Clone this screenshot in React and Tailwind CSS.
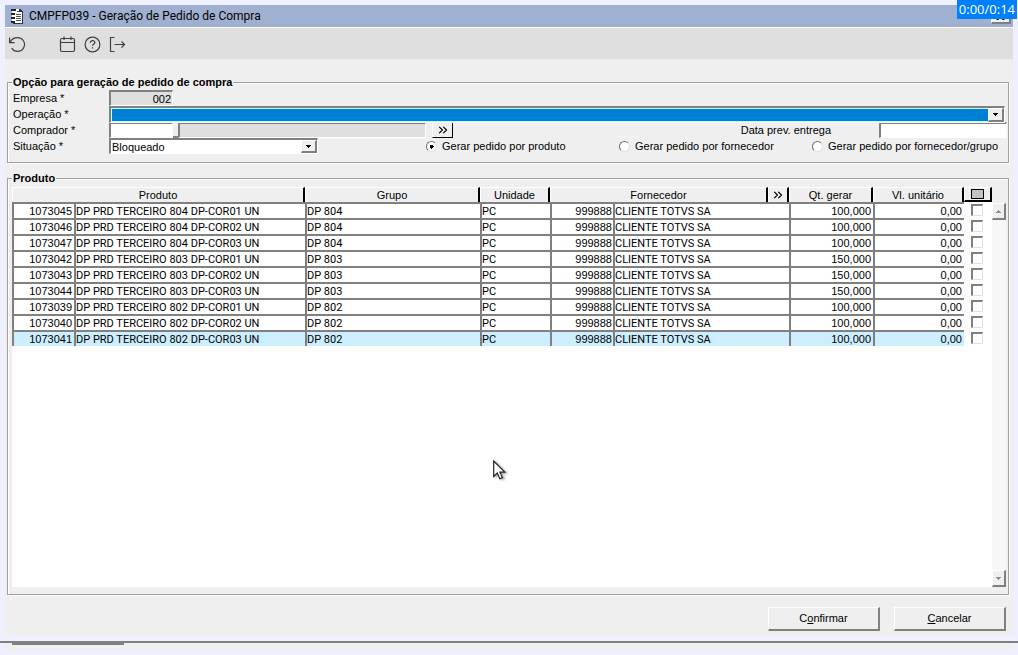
import { ChevronsRight } from 'lucide-react'

const rows = [
  { code: '1073045', name: 'DP PRD TERCEIRO 804 DP-COR01 UN', group: 'DP 804', qty: '100,000' },
  { code: '1073046', name: 'DP PRD TERCEIRO 804 DP-COR02 UN', group: 'DP 804', qty: '100,000' },
  { code: '1073047', name: 'DP PRD TERCEIRO 804 DP-COR03 UN', group: 'DP 804', qty: '100,000' },
  { code: '1073042', name: 'DP PRD TERCEIRO 803 DP-COR01 UN', group: 'DP 803', qty: '150,000' },
  { code: '1073043', name: 'DP PRD TERCEIRO 803 DP-COR02 UN', group: 'DP 803', qty: '150,000' },
  { code: '1073044', name: 'DP PRD TERCEIRO 803 DP-COR03 UN', group: 'DP 803', qty: '150,000' },
  { code: '1073039', name: 'DP PRD TERCEIRO 802 DP-COR01 UN', group: 'DP 802', qty: '100,000' },
  { code: '1073040', name: 'DP PRD TERCEIRO 802 DP-COR02 UN', group: 'DP 802', qty: '100,000' },
  { code: '1073041', name: 'DP PRD TERCEIRO 802 DP-COR03 UN', group: 'DP 802', qty: '100,000' },
]

const modes = ['Gerar pedido por produto', 'Gerar pedido por fornecedor', 'Gerar pedido por fornecedor/grupo']

const etched = 'min-w-0 border border-[#a0a0a0] shadow-[1px_1px_0_#fff,inset_1px_1px_0_#fff]'
const sunken = 'border border-l-2 border-t-2 border-t-[#808080] border-l-[#808080] border-r-white border-b-white'
const raised = 'bg-[#efefef] border-r-2 border-b-2 border-t border-l border-t-white border-l-white border-r-[#808080] border-b-[#808080]'
const th = 'h-[15px] p-0 font-normal text-center border-t border-l border-t-white border-l-white border-r-2 border-r-black bg-[#efefef]'
const cell = 'h-4 p-0 leading-[13px] overflow-hidden whitespace-nowrap border-t-2 border-l-2 border-[#808080]'
const textCell = `${cell} font-['Roboto','Liberation_Sans',sans-serif]`

function Arrow({ up, color = '#000' }) {
  return (
    <svg width="5" height="3" viewBox="0 0 5 3" shapeRendering="crispEdges">
      <path d={up ? 'M2 0h1v1h1v1h1v1H0V2h1V1h1z' : 'M0 0h5v1H4v1H3v1H2V2H1V1H0z'} fill={color} />
    </svg>
  )
}

function DropArrow() {
  return (
    <span className={`absolute right-0 top-0 bottom-0 w-4 flex items-center justify-center pointer-events-none ${raised}`}>
      <Arrow />
    </span>
  )
}

function Toolbar() {
  const btn = 'w-[25px] h-5 flex items-center justify-center'
  const svg = { width: 17, height: 17, viewBox: '0 0 17 17', fill: 'none', stroke: '#404040', strokeWidth: 1.2 }
  return (
    <div className="h-8 flex items-center pt-px border-t border-white bg-[#dfdfdf]">
      <button type="button" aria-label="Desfazer" className={btn}>
        <svg {...svg}><path d="M.6 1.500v5.100h5M1 6.600C2.200 3.800 5 1.600 8.600 1.600a6.900 6.900 0 1 1-5.900 10.500" /></svg>
      </button>
      <div className="w-[25px]" />
      <button type="button" aria-label="Calendário" className={btn}>
        <svg {...svg}><rect x="1.500" y="2.500" width="14" height="13" rx="1.500" /><path d="M1.500 6.500h14M5 .5v3.500M12 .5v3.500" /></svg>
      </button>
      <button type="button" aria-label="Ajuda" className={btn}>
        <svg {...svg}>
          <circle cx="8.500" cy="8.500" r="7.400" />
          <path d="M6.300 6.800c0-1.500 1-2.200 2.200-2.200s2.300.8 2.300 2c0 1.700-2.300 1.600-2.300 3.200M8.500 11.200v1.400" />
        </svg>
      </button>
      <button type="button" aria-label="Sair" className={btn}>
        <svg {...svg}><path d="M5.500 1.500h-4v14h4M5.500 8.500h10M12.500 5.500l3 3-3 3" /></svg>
      </button>
    </div>
  )
}

function Options() {
  const label = 'w-[97px] pl-px shrink-0'
  return (
    <fieldset className={`${etched} pl-1 pr-px pb-2 leading-4`}>
      <legend className="px-px h-4 leading-4 font-bold bg-[#efefef]">Opção para geração de pedido de compra</legend>
      <div className="flex h-4">
        <label htmlFor="empresa" className={label}>Empresa *</label>
        <input id="empresa" readOnly defaultValue="002" className={`w-16 h-4 px-px text-right bg-[#dfdfdf] ${sunken}`} />
      </div>
      <div className="flex h-4">
        <label htmlFor="operacao" className={label}>Operação *</label>
        <div className={`relative flex-1 h-[17px] mr-[2px] ${sunken}`}>
          <select id="operacao" className="block w-full h-full appearance-none bg-[#0080d4] border border-[#b8ffff] outline-none">
            <option></option>
          </select>
          <DropArrow />
        </div>
      </div>
      <div className="flex h-4">
        <label htmlFor="comprador" className={label}>Comprador *</label>
        <input id="comprador" className={`w-16 h-4 px-px bg-white outline-none ${sunken}`} />
        <div className="w-[5px] h-4 bg-[#efefef] border-b-2 border-b-[#808080]" />
        <input aria-label="Nome do comprador" readOnly className={`w-[248px] h-4 bg-[#dfdfdf] ${sunken}`} />
        <button type="button" aria-label="Buscar comprador" className="ml-[6px] w-[21px] h-4 flex items-center justify-center bg-[#efefef] border-r border-b border-black border-l border-l-white">
          <ChevronsRight size={14} strokeWidth={2} />
        </button>
        <label htmlFor="entrega" className="ml-auto mr-12">Data prev. entrega</label>
        <input id="entrega" className={`w-32 h-4 px-px bg-white outline-none ${sunken}`} />
      </div>
      <div className="flex h-4">
        <label htmlFor="situacao" className={label}>Situação *</label>
        <div className={`relative w-[209px] h-4 bg-white ${sunken}`}>
          <select id="situacao" className="block w-full h-full px-px appearance-none leading-3 outline-none">
            <option>Bloqueado</option>
          </select>
          <DropArrow />
        </div>
        <div className="ml-auto grid grid-cols-[193px_193px_195px]">
          {modes.map((m, i) => (
            <label key={m} className="flex items-center gap-[5px] whitespace-nowrap">
              <input
                type="radio"
                name="modo"
                defaultChecked={i === 0}
                className="appearance-none w-[11px] h-[11px] shrink-0 rounded-full bg-white border border-t-[#707070] border-l-[#707070] border-r-[#e0e0e0] border-b-[#e0e0e0] checked:bg-[radial-gradient(#000_2px,#fff_2px)]"
              />
              {m}
            </label>
          ))}
        </div>
      </div>
    </fieldset>
  )
}

function ScrollBar() {
  const btn = `h-[17px] w-[14px] flex items-center justify-center ${raised}`
  return (
    <div className="w-[14px] mt-4 flex flex-col justify-between bg-[#f7f7f7]">
      <button type="button" aria-label="Rolar para cima" className={btn}><Arrow up color="#909090" /></button>
      <button type="button" aria-label="Rolar para baixo" className={btn}><Arrow color="#909090" /></button>
    </div>
  )
}

function Products() {
  return (
    <section className={`${etched} mt-[15px] flex-1 flex flex-col pl-1 pr-[2px] pb-[7px]`}>
      <h2 className="self-start -mt-[9px] px-px h-[17px] leading-4 font-bold bg-[#efefef]">Produto</h2>
      <div className="flex-1 flex">
        <div className="flex-1 flex flex-col">
          <table className="w-full table-fixed border-separate border-spacing-0 leading-[14px]">
            <colgroup>
              <col className="w-[62px]" />
              <col />
              <col className="w-[175px]" />
              <col className="w-[70px]" />
              <col className="w-[63px]" />
              <col className="w-[155px]" />
              <col className="w-[21px]" />
              <col className="w-[84px]" />
              <col className="w-[91px]" />
              <col className="w-[28px]" />
            </colgroup>
            <thead>
              <tr>
                <th colSpan={2} className={th}>Produto</th>
                <th className={th}>Grupo</th>
                <th className={th}>Unidade</th>
                <th colSpan={2} className={th}>Fornecedor</th>
                <th className={th} aria-label="Buscar"><ChevronsRight size={14} strokeWidth={2} className="mx-auto" /></th>
                <th className={th}>Qt. gerar</th>
                <th className={th}>Vl. unitário</th>
                <th className={`${th} border-b-2 border-b-black`}>
                  <button type="button" aria-label="Marcar todos" className="block mx-auto w-[13px] h-[10px] border border-black bg-[#c0c4c8]" />
                </th>
              </tr>
            </thead>
            <tbody>
              {rows.map((r, i) => (
                <tr key={r.code} className={i === rows.length - 1 ? 'bg-[#cceeff]' : 'bg-white'}>
                  <td className={`${cell} text-right pr-[2px]`}>{r.code}</td>
                  <td className={textCell}>{r.name}</td>
                  <td className={textCell}>{r.group}</td>
                  <td className={textCell}>PC</td>
                  <td className={`${cell} text-right pr-px`}>999888</td>
                  <td colSpan={2} className={textCell}>CLIENTE TOTVS SA</td>
                  <td className={`${cell} text-right pr-[2px]`}>{r.qty}</td>
                  <td className={`${cell} text-right pr-[2px]`}>0,00</td>
                  <td className="h-4 p-0 bg-white">
                    <input
                      type="checkbox"
                      aria-label={`Selecionar ${r.code}`}
                      className="block ml-[7px] appearance-none w-3 h-3 bg-white border-t-2 border-l-2 border-r border-b border-t-[#808080] border-l-[#808080] border-r-[#dfdfdf] border-b-[#dfdfdf]"
                    />
                  </td>
                </tr>
              ))}
            </tbody>
          </table>
          <div className="flex-1 bg-white" />
        </div>
        <ScrollBar />
      </div>
    </section>
  )
}

export default function App() {
  const action = `w-28 h-6 text-center ${raised}`
  return (
    <div className="relative min-h-screen flex flex-col pt-[5px] bg-[#eeefff] text-[11px] text-black font-['Liberation_Sans',Arial,sans-serif]">
      <div className="flex-1 flex flex-col mx-[5px] bg-[#efefef]">
        <header className="h-[22px] flex items-center pl-[5px] pr-[2px] bg-[#a0b0d0]">
          <svg width="14" height="16" viewBox="0 0 14 16" shapeRendering="crispEdges">
            <path d="M3 1h7l3 3v12H3z" fill="#303438" />
            <path d="M2 1h7v3h3v11H2z" fill="#fff" />
            <path d="M1 1h5v2H1zM1 5h4v2H1zM1 9h4v2H1zM1 13h4v2H1z" fill="#202428" />
            <path d="M7 3h2v1H7zM6 6h5v1H6zM6 8h5v1H6zM6 10h5v1H6zM6 12h5v1H6z" fill="#505458" />
          </svg>
          <h1 className="ml-[5px] text-[12px] font-['Roboto','Liberation_Sans',sans-serif]">CMPFP039 - Geração de Pedido de Compra</h1>
          <button type="button" aria-label="Fechar" className={`ml-auto w-5 h-4 flex items-center justify-center ${raised}`}>
            <svg width="9" height="8" viewBox="0 0 9 8"><path d="M1 0l7 8M8 0L1 8" stroke="#000" strokeWidth="2" /></svg>
          </button>
        </header>
        <Toolbar />
        <main className="flex-1 flex flex-col pt-[15px] pl-[2px] pr-1">
          <Options />
          <Products />
          <div className="flex justify-end gap-[14px] pt-3 pb-[5px] pr-[3px]">
            <button type="button" className={action}>C<u>o</u>nfirmar</button>
            <button type="button" className={action}><u>C</u>ancelar</button>
          </div>
        </main>
      </div>

      {/* edge of the window behind */}
      <div className="mt-[5px] h-[2px] bg-[#808080]" />
      <div className="mx-[5px] h-[7px] mb-[5px] pl-[7px] bg-[#efefef]">
        <div className="w-28 h-[2px] bg-[#808080]" />
      </div>

      <div className="absolute right-px top-0 h-[19px] px-[2px] bg-[#0080ff] text-white text-[13px] leading-[19px] font-['Open_Sans','Noto_Sans',sans-serif]">
        0:00/0:14
      </div>
      <svg className="absolute left-[493px] top-[460px] drop-shadow-[2px_1px_1px_#0005]" width="13" height="20" viewBox="0 0 13 20">
        <path d="M.7 1v15.500l3.600-3.400 2.500 5.600 2.600-1.100-2.500-5.400h5z" fill="#fff" stroke="#202028" strokeWidth="1.200" />
      </svg>
    </div>
  )
}
